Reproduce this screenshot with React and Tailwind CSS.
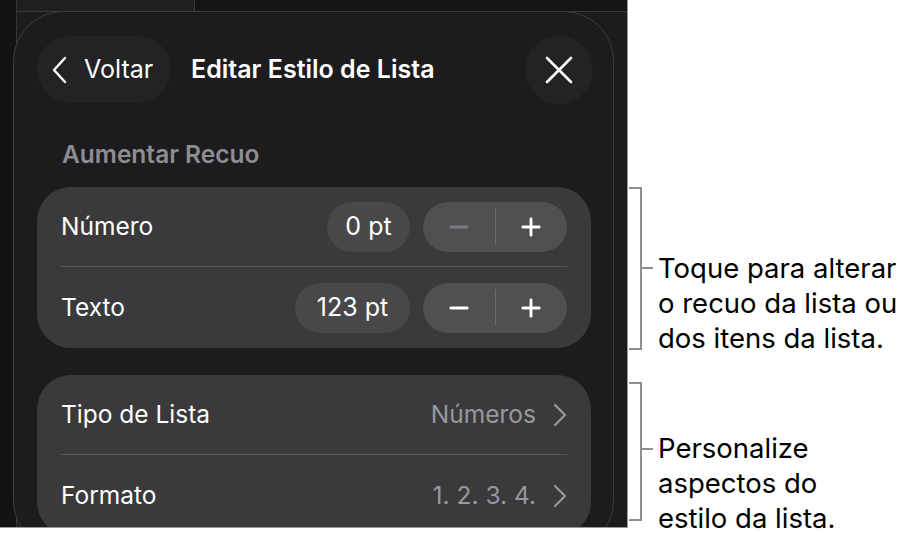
import { Minus, Plus } from 'lucide-react';

const font = { fontFamily: 'Inter, "Noto Sans", sans-serif' };

const ValuePill = ({ value, width }) => (
  <div className={`flex h-[50px] items-center justify-center rounded-full bg-[#48484a] text-[25px] text-white ${width}`}>
    {value}
  </div>
);

const Stepper = ({ minusDisabled }) => (
  <div className="flex h-[50px] w-[144px] items-center rounded-full bg-[#505052]">
    <div className="flex flex-1 items-center justify-center">
      <Minus size={28} strokeWidth={2.4} className={minusDisabled ? 'text-[#7c7c80]' : 'text-white'} />
    </div>
    <div className="h-[37px] w-px bg-[#6c6c70]" />
    <div className="flex flex-1 items-center justify-center">
      <Plus size={28} strokeWidth={2.4} className="text-white" />
    </div>
  </div>
);

const Chevron = () => (
  <svg width="14" height="24" viewBox="0 0 14 24" fill="none">
    <path d="M2 2 L12 12 L2 22" stroke="#98989d" strokeWidth="2.2" strokeLinecap="round" strokeLinejoin="round" />
  </svg>
);

const Bracket = ({ height }) => (
  <div className={`w-[13px] shrink-0 border-y-2 border-r-2 border-[#8e8e8e] ${height}`} />
);

export default function App() {
  return (
    <div className="flex h-[535px] w-[907px] bg-white" style={font}>
      {/* screenshot of the sheet */}
      <div className="flex h-[528px] w-[628px] shrink-0 overflow-hidden border-b border-r border-[#9a9a9a] bg-[#1c1c1e]">
        <div className="w-[17px] shrink-0 border-r border-[#36363a] bg-[#131315]" />
        <div className="flex min-w-0 flex-1 flex-col">
          <div className="flex h-[12px] shrink-0 border-b border-[#3a3a3c]">
            <div className="w-[178px] border-r border-[#3a3a3c] bg-[#202022]" />
            <div className="flex-1 bg-[#141416]" />
          </div>
          <div className="-ml-[4px] -mt-px h-[540px] w-[601px] shrink-0 rounded-[50px] border border-[#3c3c3e] bg-[#1c1c1e]">
            {/* header */}
            <div className="mt-[24px] flex h-[67px] items-center pl-[23px] pr-[20px]">
              <div className="flex h-[67px] w-[134px] items-center rounded-full bg-[#232325] pl-[13px]">
                <svg width="20" height="30" viewBox="0 0 20 30" fill="none">
                  <path d="M15 3 L4 15 L15 27" stroke="white" strokeWidth="2.4" strokeLinecap="round" strokeLinejoin="round" />
                </svg>
                <span className="ml-[14px] text-[25px] text-white">Voltar</span>
              </div>
              <span className="ml-[20px] text-[25px] font-semibold text-white">Editar Estilo de Lista</span>
              <div className="ml-auto flex h-[68px] w-[68px] items-center justify-center rounded-full bg-[#232325]">
                <svg width="28" height="28" viewBox="0 0 28 28" fill="none">
                  <path d="M2 2 L26 26 M26 2 L2 26" stroke="white" strokeWidth="2.6" strokeLinecap="round" />
                </svg>
              </div>
            </div>

            <p className="ml-[48px] mt-[37px] text-[24.5px] font-semibold leading-[28px] text-[#8d8d93]">Aumentar Recuo</p>

            {/* indent card */}
            <div className="ml-[23px] mt-[19px] w-[554px] rounded-[34px] bg-[#3a3a3c] px-[24px]">
              <div className="flex h-[80px] items-center border-b border-[#59595c]">
                <span className="text-[24.5px] text-white">Número</span>
                <div className="ml-auto flex items-center gap-[13px]">
                  <ValuePill value="0 pt" width="w-[83px]" />
                  <Stepper minusDisabled />
                </div>
              </div>
              <div className="flex h-[81px] items-center">
                <span className="text-[24.5px] text-white">Texto</span>
                <div className="ml-auto flex items-center gap-[13px]">
                  <ValuePill value="123 pt" width="w-[115px]" />
                  <Stepper />
                </div>
              </div>
            </div>

            {/* list type card */}
            <div className="ml-[23px] mt-[27px] w-[554px] rounded-[34px] bg-[#3a3a3c] px-[24px]">
              <div className="flex h-[80px] items-center border-b border-[#59595c]">
                <span className="text-[24.5px] text-white">Tipo de Lista</span>
                <span className="ml-auto text-[24.5px] text-[#98989d]">Números</span>
                <span className="ml-[17px]"><Chevron /></span>
              </div>
              <div className="flex h-[81px] items-center">
                <span className="text-[24.5px] text-white">Formato</span>
                <span className="ml-auto text-[24.5px] text-[#98989d]">1. 2. 3. 4.</span>
                <span className="ml-[17px]"><Chevron /></span>
              </div>
            </div>
          </div>
        </div>
      </div>

      {/* callouts */}
      <div className="flex flex-1 flex-col pl-[1px] text-[27.5px] leading-[35px] text-black">
        <div className="mt-[187px] flex items-start">
          <Bracket height="h-[163px]" />
          <div className="mt-[64px] flex items-start">
            <div className="mt-[16px] h-[2px] w-[11px] bg-[#8e8e8e]" />
            <p className="ml-[5px]">
              Toque para alterar<br />o recuo da lista ou<br />dos itens da lista.
            </p>
          </div>
        </div>
        <div className="mt-[26px] flex items-start">
          <Bracket height="h-[139px]" />
          <div className="mt-[66px] flex items-start">
            <div className="h-[2px] w-[11px] bg-[#8e8e8e]" />
            <p className="-mt-[17px] ml-[5px] leading-[35px]">
              Personalize<br />aspectos do<br />estilo da lista.
            </p>
          </div>
        </div>
      </div>
    </div>
  );
}
